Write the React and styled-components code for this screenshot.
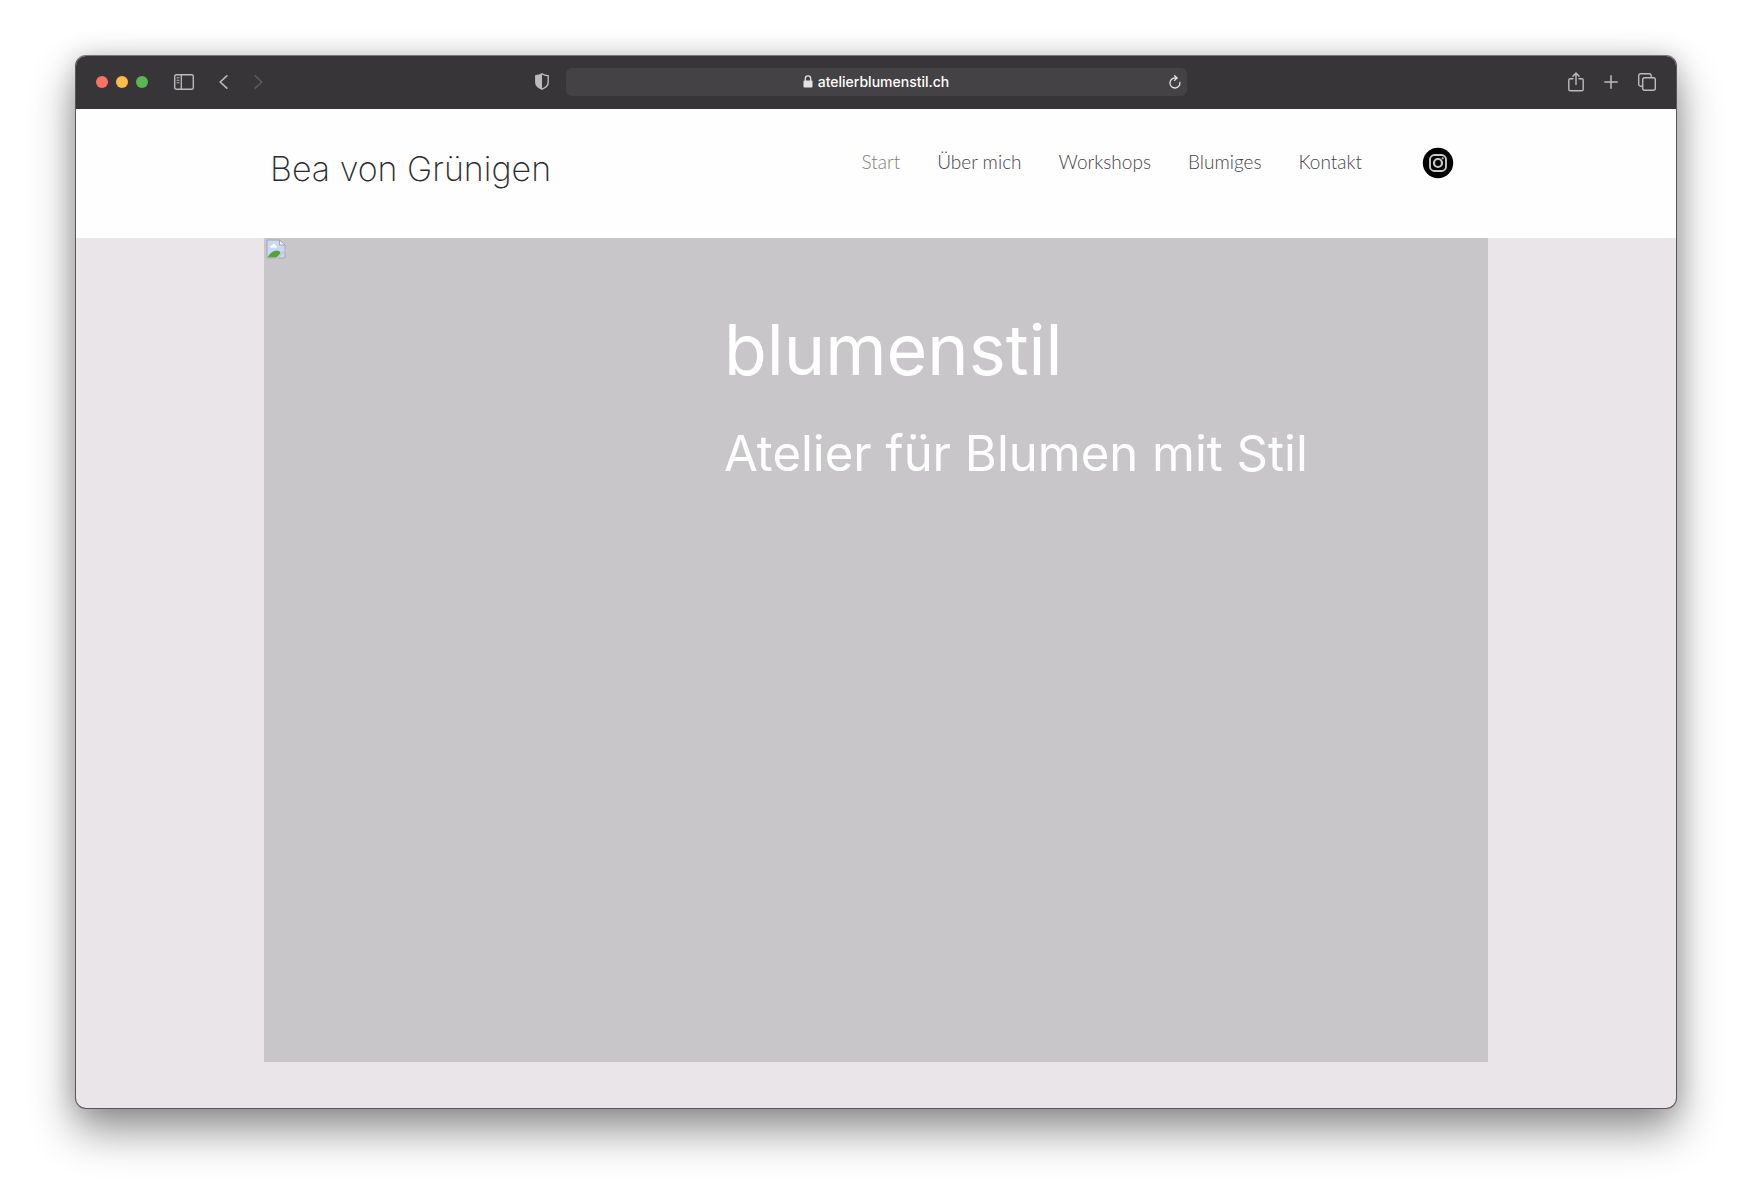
import React, { useState } from 'react';
import styled, { createGlobalStyle } from 'styled-components';

const links = ['Start', 'Über mich', 'Workshops', 'Blumiges', 'Kontakt'];

const App = () => {
  const [address, setAddress] = useState('atelierblumenstil.ch');

  return (
    <>
      <GlobalStyle />
      <Window>
        <Toolbar>
          <ToolbarSide>
            <Group $gap={8}>
              <Light type="button" aria-label="Close" $color="#fa7360" />
              <Light type="button" aria-label="Minimize" $color="#fdbb48" />
              <Light type="button" aria-label="Zoom" $color="#5bb652" />
            </Group>
            <Group $gap={25}>
              <IconButton type="button" aria-label="Sidebar">
                <svg width="20" height="16" viewBox="0 0 20 16" fill="none" stroke="currentColor">
                  <rect x="0.7" y="0.7" width="18.6" height="14.6" rx="1.6" strokeWidth="1.4" />
                  <path d="M7.3 1v14" strokeWidth="1.3" />
                  <path d="M2.6 3.7h2.8M2.6 6.2h2.8M2.6 8.7h2.8" strokeWidth="1.1" />
                </svg>
              </IconButton>
              <Group $gap={26}>
                <IconButton type="button" aria-label="Back">
                  <svg width="9" height="14" viewBox="0 0 9 14" fill="none" stroke="currentColor" strokeWidth="1.6" strokeLinecap="round" strokeLinejoin="round">
                    <path d="M7.8 0.9L1.2 7l6.6 6.1" />
                  </svg>
                </IconButton>
                <IconButton type="button" aria-label="Forward" disabled>
                  <svg width="9" height="14" viewBox="0 0 9 14" fill="none" stroke="currentColor" strokeWidth="1.6" strokeLinecap="round" strokeLinejoin="round">
                    <path d="M1.2 0.9L7.8 7l-6.6 6.1" />
                  </svg>
                </IconButton>
              </Group>
            </Group>
            <Privacy type="button" aria-label="Privacy report">
              <svg width="14" height="17" viewBox="0 0 14 17">
                <path d="M7 0.8C8.6 2 10.7 2.6 13.2 2.8v6.4c0 3-2.3 5.3-6.2 7-3.9-1.7-6.2-4-6.2-7V2.8C3.3 2.6 5.4 2 7 .8z" fill="none" stroke="currentColor" strokeWidth="1.4" strokeLinejoin="round" />
                <path d="M7 0.8v15.4c-3.9-1.7-6.2-4-6.2-7V2.8C3.3 2.6 5.4 2 7 .8z" fill="currentColor" />
              </svg>
            </Privacy>
          </ToolbarSide>
          <AddressBar>
            <AddressLabel>
              <svg width="10" height="13" viewBox="0 0 10 13" aria-hidden="true">
                <path d="M2.3 6V3.6a2.7 2.7 0 0 1 5.4 0V6" fill="none" stroke="currentColor" strokeWidth="1.3" />
                <rect x="0.5" y="5.4" width="9" height="7.2" rx="1.1" fill="currentColor" />
              </svg>
              <AddressInput
                aria-label="Address"
                spellCheck="false"
                value={address}
                onChange={(e) => setAddress(e.target.value)}
              />
            </AddressLabel>
            <Reload type="button" aria-label="Reload">
              <svg width="12" height="14" viewBox="0 0 12 14" fill="none" stroke="currentColor" strokeWidth="1.3" strokeLinecap="round" strokeLinejoin="round">
                <path d="M10.9 7.4A5 5 0 1 1 6 3h1.9" />
                <path d="M5.6 0.7L8 3 5.600 5.4" />
              </svg>
            </Reload>
          </AddressBar>
          <Actions>
            <IconButton type="button" aria-label="Share">
              <svg width="16" height="20" viewBox="0 0 16 20" fill="none" stroke="currentColor" strokeWidth="1.4" strokeLinecap="round" strokeLinejoin="round">
                <path d="M5 6.7H2.4A1.6 1.6 0 0 0 .8 8.3v8.9a1.6 1.6 0 0 0 1.6 1.6h11.2a1.6 1.6 0 0 0 1.6-1.6V8.3a1.6 1.6 0 0 0-1.6-1.6H11" />
                <path d="M8 12.5V1.2M4.9 4.2L8 1.1l3.1 3.1" />
              </svg>
            </IconButton>
            <IconButton type="button" aria-label="New tab">
              <svg width="14" height="14" viewBox="0 0 14 14" stroke="currentColor" strokeWidth="1.5" strokeLinecap="round">
                <path d="M7 0.8v12.4M0.8 7h12.4" />
              </svg>
            </IconButton>
            <IconButton type="button" aria-label="Tab overview">
              <svg width="18" height="18" viewBox="0 0 18 18" fill="none" stroke="currentColor" strokeWidth="1.4">
                <rect x="4.7" y="4.7" width="12.6" height="12.6" rx="2" />
                <path d="M4.5 13.2H2.7a2 2 0 0 1-2-2V2.7a2 2 0 0 1 2-2h8.500a2 2 0 0 1 2 2v1.8" />
              </svg>
            </IconButton>
          </Actions>
        </Toolbar>

        <Header>
          <HeaderInner>
            <SiteName>Bea von Grünigen</SiteName>
            <Menu>
              {links.map((link) => (
                <MenuLink key={link} href="#" $active={link === 'Start'}>{link}</MenuLink>
              ))}
            </Menu>
            <Instagram href="#" aria-label="Instagram">
              <svg width="32" height="32" viewBox="0 0 32 32" fill="none">
                <circle cx="16" cy="16" r="15.2" fill="#000" />
                <rect x="8" y="8" width="16" height="16" rx="4.5" stroke="#c8c8c8" strokeWidth="1.9" />
                <circle cx="16" cy="16" r="4" stroke="#c8c8c8" strokeWidth="2.2" />
                <circle cx="20.7" cy="11.3" r="1.1" fill="#c8c8c8" />
              </svg>
            </Instagram>
          </HeaderInner>
        </Header>

        <Main>
          <Hero>
            <MissingImage width="20" height="20" viewBox="0 0 20 20" aria-hidden="true">
              <path d="M1 1h12.5L19 6v13H1z" fill="#c9d9f5" />
              <path d="M4 8.5c0-1.5 1-2.2 2.2-2 .6-2 3.4-1.8 3.6.2 1.4.1 1.6 1.8.3 2z" fill="#fff" />
              <path d="M1.5 18.5c2.5-5 7.5-8.5 11.5-6.5 1.5.8 2 2.2.5 3.5l-3 3z" fill="#50a43c" />
              <path d="M1 1h12.500L19 6v13H1z" fill="none" stroke="#a3a9ad" />
              <path d="M13.5 1v5H19z" fill="#f4f5f6" stroke="#a3a9ad" />
              <path d="M20 10.500L10.500 20" stroke="#c8c6c9" strokeWidth="1.6" />
            </MissingImage>
            <HeroText>
              <Title>blumenstil</Title>
              <Subtitle>Atelier für Blumen mit Stil</Subtitle>
            </HeroText>
          </Hero>
        </Main>
      </Window>
    </>
  );
};

export default App;

const GlobalStyle = createGlobalStyle`
  * {
    box-sizing: border-box;
  }

  body {
    margin: 0;
    background: #fff;
    font-family: Inter, "Liberation Sans", sans-serif;
  }

  svg {
    display: block;
  }
`;

const Window = styled.div`
  margin: 55px 75px 94px;
  overflow: hidden;
  border: 1px solid #59565a;
  border-top-color: #77757a;
  border-radius: 11px;
  background: #e9e5e9;
  box-shadow: 0 22px 44px rgba(0, 0, 0, 0.42), 0 0 24px rgba(0, 0, 0, 0.16);
`;

const Toolbar = styled.div`
  display: grid;
  grid-template-columns: 1fr minmax(0, 621px) 1fr;
  align-items: center;
  height: 53px;
  padding: 0 20px 2px;
  background: #383538;
  color: #bdbbbd;
`;

const Group = styled.div`
  display: flex;
  align-items: center;
  gap: ${(props) => props.$gap}px;
`;

const ToolbarSide = styled.div`
  display: flex;
  align-items: center;
  gap: 26px;
  padding-right: 17px;
`;

const Actions = styled.div`
  display: flex;
  align-items: center;
  justify-content: flex-end;
  gap: 20px;
`;

const IconButton = styled.button`
  padding: 0;
  border: none;
  background: none;
  color: inherit;
  cursor: pointer;

  &:disabled {
    color: #5e5b5e;
    cursor: default;
  }
`;

const Privacy = styled(IconButton)`
  margin-left: auto;
`;

const Light = styled.button`
  width: 12px;
  height: 12px;
  padding: 0;
  border: none;
  border-radius: 50%;
  background: ${(props) => props.$color};
`;

const AddressBar = styled.div`
  display: grid;
  grid-template-columns: 1fr auto 1fr;
  align-items: center;
  height: 28px;
  padding: 0 6px;
  border-radius: 6px;
  background: #454245;
  color: #e4e2e4;
`;

const AddressLabel = styled.label`
  grid-column: 2;
  display: flex;
  align-items: center;
  gap: 5px;
`;

const AddressInput = styled.input`
  field-sizing: content;
  padding: 0;
  border: none;
  outline: none;
  background: none;
  color: #fff;
  font: 500 14px/20px Inter, "Liberation Sans", sans-serif;
`;

const Reload = styled(IconButton)`
  justify-self: end;
`;

const Header = styled.header`
  background: #fefefe;
`;

const HeaderInner = styled.div`
  display: flex;
  align-items: flex-start;
  max-width: 1224px;
  min-height: 129px;
  margin: 0 auto;
  padding: 38px 34px 0 6px;
`;

const SiteName = styled.div`
  color: #2c2b30;
  font-size: 34px;
  font-weight: 200;
  line-height: 44px;
`;

const Menu = styled.nav`
  display: flex;
  gap: 37px;
  margin-left: auto;
`;

const MenuLink = styled.a`
  color: ${(props) => (props.$active ? '#827d76' : '#45434a')};
  font-family: Lato, "Liberation Sans", sans-serif;
  font-size: 19px;
  font-weight: 300;
  line-height: 30px;
  text-decoration: none;
`;

const Instagram = styled.a`
  margin-left: 60px;
`;

const Main = styled.main`
  padding-bottom: 46px;
`;

const Hero = styled.section`
  display: grid;
  grid-template-columns: 460px 1fr;
  align-items: start;
  max-width: 1224px;
  min-height: 824px;
  margin: 0 auto;
  background: #c8c6c9;
`;

const MissingImage = styled.svg`
  margin: 1px 2px;
`;

const HeroText = styled.div`
  padding-top: 72px;
  color: #fff;
`;

const Title = styled.h1`
  margin: 0;
  font-size: 70px;
  font-weight: 400;
  line-height: 80px;
`;

const Subtitle = styled.h2`
  margin: 34px 0 0;
  font-size: 49px;
  font-weight: 400;
  line-height: 60px;
`;
